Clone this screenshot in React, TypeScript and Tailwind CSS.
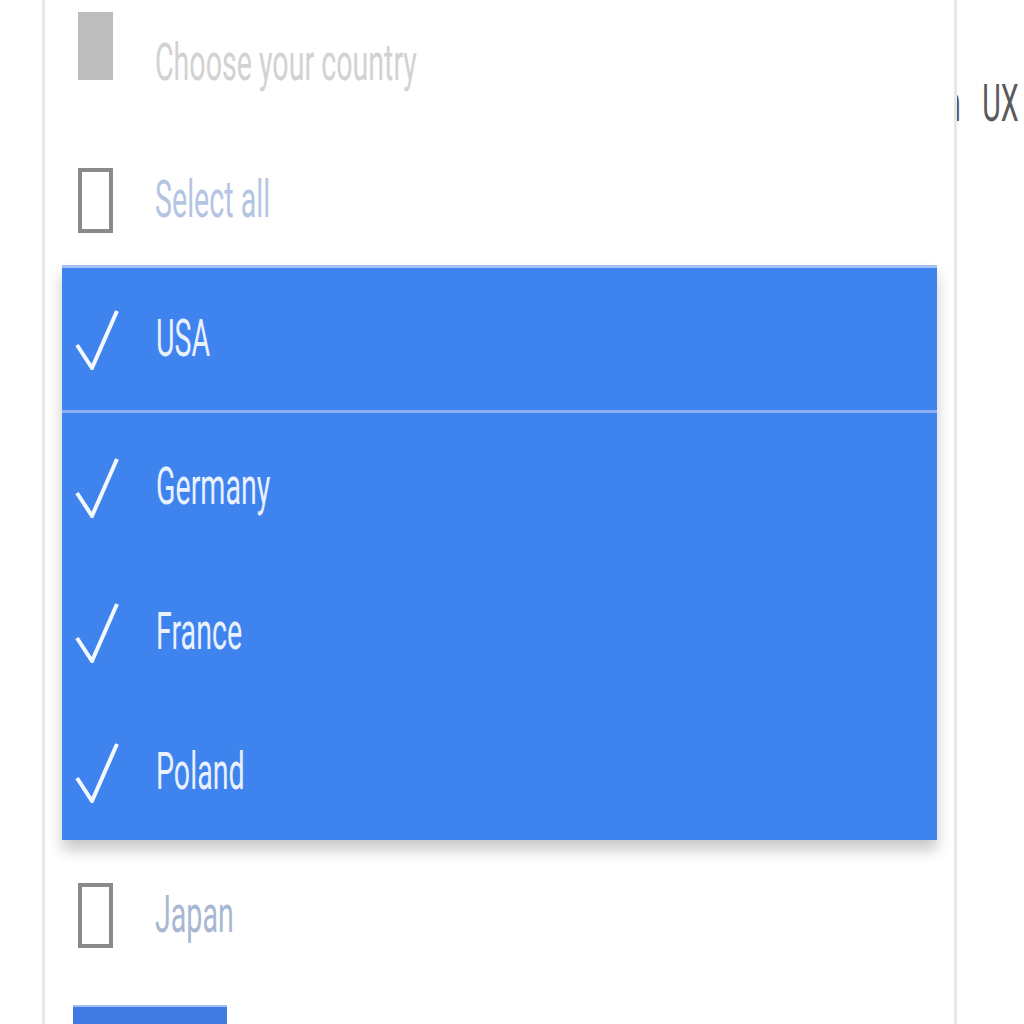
import React from 'react';

const SELECTED = [
  { name: 'USA', h: 'h-[142px]' },
  { name: 'Germany', h: 'h-[148px]' },
  { name: 'France', h: 'h-[142px]' },
  { name: 'Poland', h: 'h-[137px]' },
];

function Label({ text, color, extra = '' }: { text: string; color: string; extra?: string }) {
  return (
    <span
      className={`inline-block origin-left scale-x-[0.55] whitespace-nowrap text-[52px] leading-none font-normal ${color} ${extra}`}
      style={{ fontFamily: 'Roboto, "Liberation Sans", sans-serif' }}
    >
      {text}
    </span>
  );
}

function Check() {
  return (
    <svg width="44" height="62" viewBox="0 0 44 62" className="shrink-0">
      <path d="M2 37 L17 60 L42 3" fill="none" stroke="#f4f8ff" strokeWidth="4" strokeLinejoin="miter" />
    </svg>
  );
}

function Box() {
  return <div className="w-[35px] h-[65px] shrink-0 border-[4px] border-[#8a8a8a] bg-white" />;
}

export default function App() {
  return (
    <div className="w-[1024px] h-[1024px] overflow-hidden bg-white flex">
      {/* Card */}
      <div className="ml-[42px] w-[915px] h-full shrink-0 overflow-hidden border-x-[3px] border-[#e8e8e8] bg-white flex flex-col">
        {/* Placeholder */}
        <div className="h-[126px] shrink-0 flex items-center pl-[33px]">
          <div className="w-[35px] h-[68px] -mt-[34px] bg-[#bdbdbd] shrink-0" />
          <div className="ml-[42px]">
            <Label text="Choose your country" color="text-[#d2d2d2]" />
          </div>
        </div>

        {/* Select all */}
        <div className="h-[139px] shrink-0 pt-[9px] flex items-center pl-[33px]">
          <Box />
          <div className="ml-[42px]">
            <Label text="Select all" color="text-[#b3c5e3]" />
          </div>
        </div>

        {/* Selected options */}
        <div className="mx-[17px] shrink-0 border-t-[3px] border-[#a3c1f3] bg-[#3f83ee] shadow-[0_10px_14px_rgba(0,0,0,0.22)] flex flex-col">
          {SELECTED.map((item, i) => (
            <React.Fragment key={item.name}>
              {i === 1 && <div className="h-[3px] bg-[#8bb0f3]" />}
              <div className={`${item.h} shrink-0 flex items-center pl-[13px]`}>
                <Check />
                <div className="ml-[37px]">
                  <Label text={item.name} color="text-[#e9f1ff]" />
                </div>
              </div>
            </React.Fragment>
          ))}
        </div>

        {/* Japan */}
        <div className="h-[150px] shrink-0 flex items-center pl-[33px]">
          <Box />
          <div className="ml-[42px]">
            <Label text="Japan" color="text-[#a8b8d2]" />
          </div>
        </div>

        {/* Button */}
        <div className="mt-[15px] shrink-0 ml-[28px] w-[154px] h-[60px] bg-[#3f7be3] border-t-2 border-[#9fc0f0]" />
      </div>

      {/* Right column text, clipped by the card */}
      <div className="flex-1 overflow-hidden pt-[78px]">
        <div className="-ml-[12px] whitespace-nowrap">
          <Label text="n UX" color="text-[#5a5a5a]" extra="[word-spacing:26px]" />
        </div>
      </div>
    </div>
  );
}
